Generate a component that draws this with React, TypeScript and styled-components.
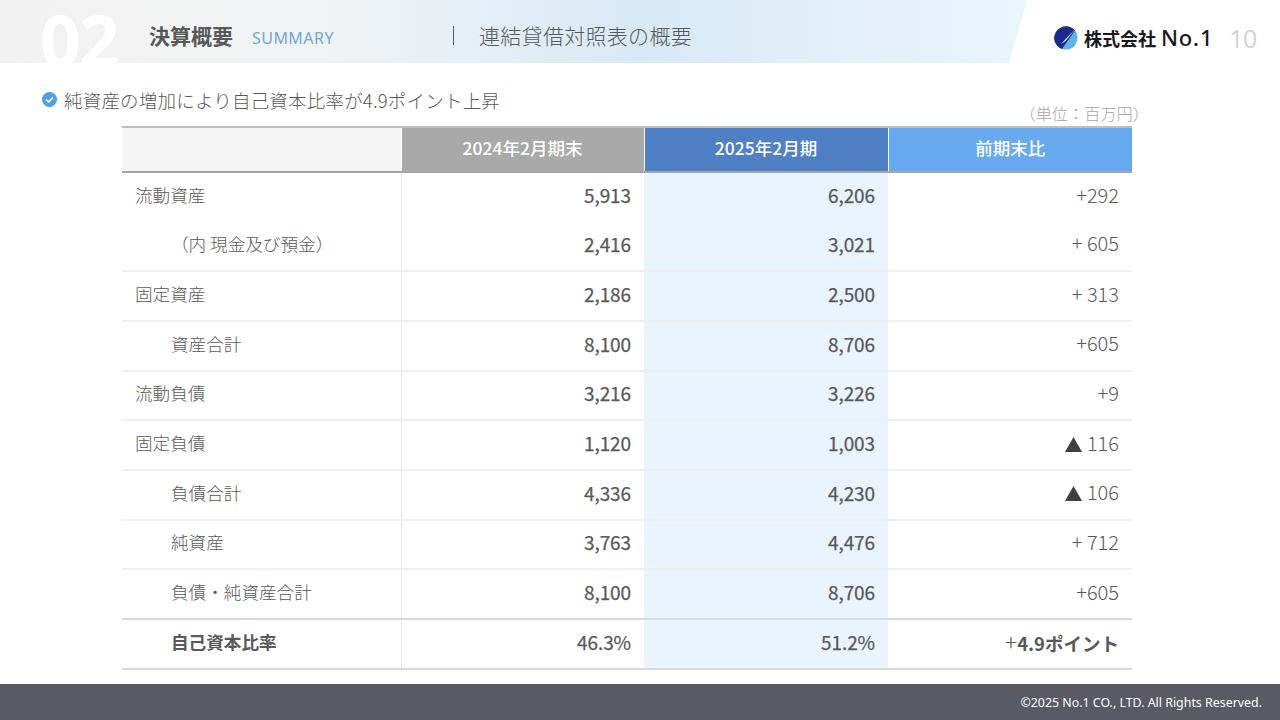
import React from 'react';
import styled, { createGlobalStyle } from 'styled-components';

const Global = createGlobalStyle`
  html, body { margin: 0; padding: 0; background: #fff; }
  body { font-family: "Noto Sans CJK JP", "Noto Sans", sans-serif; }
`;

const Page = styled.div`
  width: 1280px;
  height: 720px;
  display: flex;
  flex-direction: column;
  overflow: hidden;
  background: #fff;
  color: #595959;
`;

const Header = styled.header`
  height: 63px;
  display: flex;
  align-items: stretch;
  flex-shrink: 0;
`;

const Band = styled.div`
  width: 1027px;
  display: flex;
  align-items: center;
  overflow: hidden;
  padding: 8px 0 0 40px;
  box-sizing: border-box;
  background: linear-gradient(90deg, #f2f2f2 0%, #f2f3f4 30%, #e6eff6 45%, #d8e9f6 62%, #eaf5fc 100%);
  clip-path: polygon(0 0, 100% 0, 1009px 100%, 0 100%);
`;

const Chapter = styled.span`
  width: 109px;
  font-family: "Open Sans", sans-serif;
  font-size: 71px;
  font-weight: 700;
  line-height: 63px;
  letter-spacing: -1.5px;
  color: #fff;
  transform: translateY(4px);
`;

const SectionTitle = styled.h1`
  margin: 0;
  width: 103px;
  font-size: 21px;
  font-weight: 700;
  color: #595959;
  white-space: nowrap;
  transform: translateY(-1px);
`;

const SectionEn = styled.span`
  width: 201px;
  font-family: "Noto Sans", sans-serif;
  font-size: 16px;
  letter-spacing: 0.45px;
  color: #6ea8dc;
  transform: translateY(2px);
`;

const Divider = styled.span`
  width: 1px;
  height: 19px;
  background: #595959;
  margin-right: 25px;
`;

const SubTitle = styled.span`
  font-size: 21px;
  font-weight: 300;
  color: #595959;
  letter-spacing: 0.3px;
  white-space: nowrap;
  transform: translateY(-1px);
`;

const Brand = styled.div`
  flex: 1;
  display: flex;
  align-items: center;
  padding: 12px 0 0 27px;
`;

const LogoText = styled.span`
  margin-left: 6px;
  font-size: 18px;
  font-weight: 700;
  color: #1a1a1a;
  white-space: nowrap;
`;

const LogoNo = styled.span`
  margin-left: 5px;
  font-family: "Noto Sans", sans-serif;
  font-size: 22px;
  font-weight: 500;
  letter-spacing: 0.8px;
  color: #1a1a1a;
  transform: translateY(-1px);
`;

const PageNo = styled.span`
  margin-left: 16px;
  font-family: "Open Sans", sans-serif;
  font-size: 25px;
  font-weight: 500;
  letter-spacing: -0.5px;
  color: #d4d4d4;
`;

const Lead = styled.div`
  height: 63px;
  padding-left: 42px;
  box-sizing: border-box;
  position: relative;
  display: flex;
  align-items: flex-start;
  gap: 7px;
`;

const LeadIcon = styled.svg`
  width: 15px;
  height: 15px;
  margin-top: 29px;
  flex-shrink: 0;
`;

const LeadText = styled.p`
  margin: 24px 0 0;
  font-size: 18.5px;
  font-weight: 300;
  line-height: 26px;
  letter-spacing: 0.2px;
  color: #595959;
  white-space: nowrap;
`;

const Unit = styled.span`
  position: absolute;
  right: 131px;
  top: 39px;
  font-size: 16.2px;
  font-weight: 300;
  line-height: 22px;
  color: #a6a6a6;
  white-space: nowrap;
`;

const TableWrap = styled.main`
  flex: 1;
  padding-left: 122px;
`;

const Table = styled.table`
  width: 1010px;
  table-layout: fixed;
  border-collapse: collapse;
  border-spacing: 0;
`;

const HeadRow = styled.tr`
  height: 45px;
  border-top: 2px solid #bfbfbf;
  border-bottom: 2px solid #a6a6a6;
`;

const HeadCell = styled.th<{ $bg: string; $w: number }>`
  box-sizing: border-box;
  width: ${p => p.$w}px;
  padding: 0 0 4px;
  background: ${p => p.$bg};
  border-left: 1px solid #fff;
  font-size: 17.5px;
  font-weight: 500;
  color: #fff;
  &:first-child { border-left: 0; }
`;

const Row = styled.tr<{ $line: 'none' | 'thin' | 'strong' }>`
  height: 49.67px;
  border-bottom: ${p =>
    p.$line === 'none' ? '0' : p.$line === 'strong' ? '2px solid #d9d9d9' : '2px solid #efefef'};
`;

const LabelCell = styled.td<{ $indent: boolean; $bold: boolean }>`
  padding: 0 0 5px ${p => (p.$indent ? '49px' : '13px')};
  font-size: 17.6px;
  font-weight: ${p => (p.$bold ? 700 : 300)};
  color: #595959;
  white-space: nowrap;
  border-right: 1px solid #e6e6e6;
`;

const ValueCell = styled.td<{ $tint?: boolean }>`
  padding: 0 13px 5px 0;
  text-align: right;
  font-size: 19px;
  font-weight: 400;
  letter-spacing: -0.1px;
  -webkit-text-stroke: 0.25px #595959;
  color: #595959;
  background: ${p => (p.$tint ? '#e9f4fe' : 'transparent')};
`;

const DiffCell = styled.td<{ $bold: boolean }>`
  padding: 0 13px 6px 0;
  text-align: right;
  font-size: ${p => (p.$bold ? '18.5px' : '20px')};
  font-weight: ${p => (p.$bold ? 700 : 300)};
  color: #595959;
  white-space: nowrap;
`;

const ThinPlus = styled.span`
  font-weight: 300;
  font-size: 23px;
`;

const Tri = styled.svg`
  width: 17px;
  height: 15px;
  margin-right: 5px;
  vertical-align: -1px;
`;

const Footer = styled.footer`
  height: 36px;
  flex-shrink: 0;
  background: #595a64;
  display: flex;
  align-items: center;
  justify-content: flex-end;
  padding-right: 18px;
  font-family: "Noto Sans", sans-serif;
  font-size: 12.4px;
  color: #fff;
`;

type R = { l: string; a: string; b: string; d: React.ReactNode; indent?: boolean; bold?: boolean; line: 'none' | 'thin' | 'strong' };

const Down = ({ v }: { v: string }) => (
  <>
    <Tri viewBox="0 0 17 15"><polygon points="8.5,0 17,15 0,15" fill="#404040" /></Tri>
    {v}
  </>
);

const rows: R[] = [
  { l: '流動資産', a: '5,913', b: '6,206', d: '+292', line: 'none' },
  { l: '（内 現金及び預金）', a: '2,416', b: '3,021', d: '+ 605', indent: true, line: 'thin' },
  { l: '固定資産', a: '2,186', b: '2,500', d: '+ 313', line: 'thin' },
  { l: '資産合計', a: '8,100', b: '8,706', d: '+605', indent: true, line: 'thin' },
  { l: '流動負債', a: '3,216', b: '3,226', d: '+9', line: 'thin' },
  { l: '固定負債', a: '1,120', b: '1,003', d: <Down v="116" />, line: 'thin' },
  { l: '負債合計', a: '4,336', b: '4,230', d: <Down v="106" />, indent: true, line: 'thin' },
  { l: '純資産', a: '3,763', b: '4,476', d: '+ 712', indent: true, line: 'thin' },
  { l: '負債・純資産合計', a: '8,100', b: '8,706', d: '+605', indent: true, line: 'strong' },
  { l: '自己資本比率', a: '46.3%', b: '51.2%', d: <><ThinPlus>+</ThinPlus>4.9ポイント</>, indent: true, bold: true, line: 'strong' },
];

export default function App() {
  return (
    <Page>
      <Global />
      <Header>
        <Band>
          <Chapter>02</Chapter>
          <SectionTitle>決算概要</SectionTitle>
          <SectionEn>SUMMARY</SectionEn>
          <Divider />
          <SubTitle>連結貸借対照表の概要</SubTitle>
        </Band>
        <Brand>
          <svg width="24" height="24" viewBox="0 0 24 24">
            <circle cx="12" cy="12" r="11.5" fill="#5db5ea" />
            <path d="M21 4.5 A11.5 11.5 0 0 0 3.5 4 A11.5 11.5 0 0 0 8 23 Z" fill="#1c2a8c" />
            <path d="M22 2 L7 18 L11.5 15 Z" fill="#fff" />
          </svg>
          <LogoText>株式会社</LogoText>
          <LogoNo>No.1</LogoNo>
          <PageNo>10</PageNo>
        </Brand>
      </Header>
      <Lead>
        <LeadIcon viewBox="0 0 15 15">
          <circle cx="7.5" cy="7.5" r="7.5" fill="#4f9fe8" />
          <path d="M4 7.6 L6.6 10 L11 5.4" fill="none" stroke="#fff" strokeWidth="1.6" />
        </LeadIcon>
        <LeadText>純資産の増加により自己資本比率が4.9ポイント上昇</LeadText>
        <Unit>（単位：百万円）</Unit>
      </Lead>
      <TableWrap>
        <Table>
          <thead>
            <HeadRow>
              <HeadCell $bg="#f5f5f5" $w={279} />
              <HeadCell $bg="#a9a9a9" $w={243}>2024年2月期末</HeadCell>
              <HeadCell $bg="#4f7fc4" $w={244}>2025年2月期</HeadCell>
              <HeadCell $bg="#66a9ee" $w={244}>前期末比</HeadCell>
            </HeadRow>
          </thead>
          <tbody>
            {rows.map((r, i) => (
              <Row key={i} $line={r.line}>
                <LabelCell $indent={!!r.indent} $bold={!!r.bold}>{r.l}</LabelCell>
                <ValueCell>{r.a}</ValueCell>
                <ValueCell $tint>{r.b}</ValueCell>
                <DiffCell $bold={!!r.bold}>{r.d}</DiffCell>
              </Row>
            ))}
          </tbody>
        </Table>
      </TableWrap>
      <Footer>©2025 No.1 CO., LTD. All Rights Reserved.</Footer>
    </Page>
  );
}
